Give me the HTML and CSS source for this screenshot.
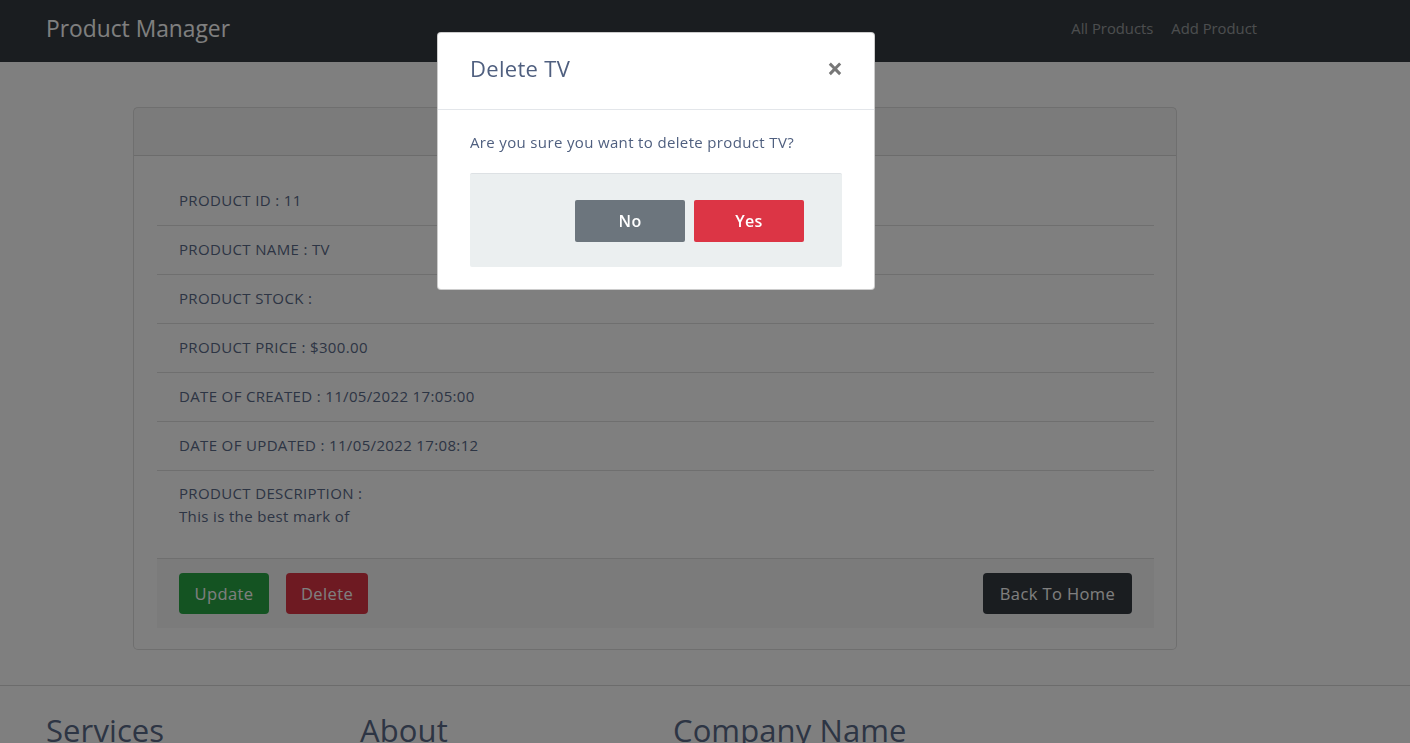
FILE: index.html
```html
<!DOCTYPE html>
<html lang="en">
<head>
<meta charset="utf-8">
<title>Product Manager</title>
<link rel="stylesheet" href="styles.css">
</head>
<body>
<nav class="navbar">
  <a class="brand" href="#">Product Manager</a>
  <ul class="nav-links">
    <li><a href="#">All Products</a></li>
    <li><a href="#">Add Product</a></li>
  </ul>
</nav>

<main class="main">
  <section class="card">
    <div class="card-header"></div>
    <div class="card-body">
      <ul class="list">
        <li class="item">PRODUCT ID : 11</li>
        <li class="item">PRODUCT NAME : TV</li>
        <li class="item">PRODUCT STOCK :</li>
        <li class="item">PRODUCT PRICE : $300.00</li>
        <li class="item">DATE OF CREATED : 11/05/2022 17:05:00</li>
        <li class="item">DATE OF UPDATED : 11/05/2022 17:08:12</li>
        <li class="item item-desc">PRODUCT DESCRIPTION :<br>This is the best mark of</li>
      </ul>
      <div class="card-footer">
        <div class="btn-group">
          <button class="btn btn-success">Update</button>
          <button class="btn btn-danger">Delete</button>
        </div>
        <button class="btn btn-dark">Back To Home</button>
      </div>
    </div>
  </section>
</main>

<footer class="footer">
  <div class="footer-col"><h3>Services</h3></div>
  <div class="footer-col"><h3>About</h3></div>
  <div class="footer-col"><h3>Company Name</h3></div>
</footer>

<div class="backdrop"></div>

<div class="modal">
  <div class="modal-header">
    <h5 class="modal-title">Delete TV</h5>
    <span class="close">&times;</span>
  </div>
  <div class="modal-body">
    <p class="modal-text">Are you sure you want to delete product TV?</p>
    <div class="modal-actions">
      <button class="mbtn mbtn-secondary">No</button>
      <button class="mbtn mbtn-danger">Yes</button>
    </div>
  </div>
</div>
</body>
</html>
```

FILE: styles.css
```css
* { box-sizing: border-box; }
html, body { margin: 0; padding: 0; }
body {
  font-family: "Open Sans", "Noto Sans", sans-serif;
  color: #5a6a88;
  background: #fff;
  font-size: 15px;
  height: 743px;
  overflow: hidden;
}
a { text-decoration: none; }

.navbar {
  height: 62px;
  background: #343a40;
  display: flex;
  align-items: center;
  justify-content: space-between;
  padding: 0 153px 6px 46px;
}
.brand {
  color: #fff;
  font-size: 22.8px;
  letter-spacing: 0;
}
.nav-links {
  list-style: none;
  display: flex;
  gap: 18px;
  margin: 0;
  padding: 0;
}
.nav-links a {
  color: rgba(255,255,255,0.5);
  font-size: 14.8px;
  letter-spacing: 0;
}

.main {
  padding: 45px 233px 35px 133px;
}
.card {
  border: 1px solid rgba(0,0,0,0.125);
  border-radius: 5px;
  background: #fff;
}
.card-header {
  height: 48px;
  background: rgba(0,0,0,0.03);
  border-bottom: 1px solid rgba(0,0,0,0.125);
}
.card-body {
  padding: 21px 22px 21px 23px;
}
.list {
  list-style: none;
  margin: 0;
  padding: 0;
}
.item {
  padding: 13px 22px 15px;
  line-height: 20px;
  border-bottom: 1px solid rgba(0,0,0,0.125);
  letter-spacing: 0.35px;
}
.item-desc {
  padding: 11px 22px 30px;
  line-height: 23px;
}
.card-footer {
  background: rgba(0,0,0,0.03);
  display: flex;
  justify-content: space-between;
  align-items: center;
  padding: 14px 22px;
}
.btn-group { display: flex; gap: 17px; }
.btn {
  font-family: inherit;
  font-size: 16.5px;
  border: none;
  border-radius: 4px;
  color: #fff;
  height: 41px;
  padding: 0 10px;
  letter-spacing: 0.4px;
}
.btn-success { background: #28a745; width: 90px; }
.btn-danger { background: #dc3545; width: 82px; }
.btn-dark { background: #343a40; width: 149px; }

.footer {
  border-top: 1px solid rgba(0,0,0,0.15);
  display: grid;
  grid-template-columns: 314px 313px 1fr;
  padding: 0 46px;
}
.footer h3 {
  margin: 23px 0 0;
  font-size: 31px;
  font-weight: 400;
  color: #5a6a88;
  letter-spacing: 0.1px;
}

.backdrop {
  position: fixed;
  inset: 0;
  background: rgba(0,0,0,0.5);
}

.modal {
  position: fixed;
  left: 437px;
  top: 32px;
  width: 438px;
  background: #fff;
  border-radius: 4px;
  border: 1px solid rgba(0,0,0,0.2);
}
.modal-header {
  height: 77px;
  display: flex;
  align-items: center;
  justify-content: space-between;
  padding: 0 31px 6px 32px;
  border-bottom: 1px solid #e3e6ea;
}
.modal-title {
  margin: 0;
  font-size: 22px;
  font-weight: 400;
  color: #4f5f7f;
  letter-spacing: 0.3px;
}
.close {
  font-size: 28px;
  font-weight: 700;
  color: #777;
  line-height: 1;
}
.modal-body {
  padding: 21px 32px 22px;
}
.modal-text {
  margin: 0 0 20px;
  font-size: 15px;
  color: #4f5f7f;
  line-height: 22px;
  letter-spacing: 0.35px;
}
.modal-actions {
  background: #ebeff0;
  border-top: 1px solid #dde1e4;
  border-radius: 2px;
  height: 94px;
  display: flex;
  justify-content: flex-end;
  align-items: center;
  gap: 9px;
  padding: 0 38px 0 0;
}
.mbtn {
  font-family: inherit;
  width: 110px;
  height: 42px;
  border: none;
  border-radius: 2px;
  color: #fff;
  font-size: 16px;
  font-weight: 600;
  letter-spacing: 0.3px;
}
.mbtn-secondary { background: #6c757d; }
.mbtn-danger { background: #dc3545; }
```
